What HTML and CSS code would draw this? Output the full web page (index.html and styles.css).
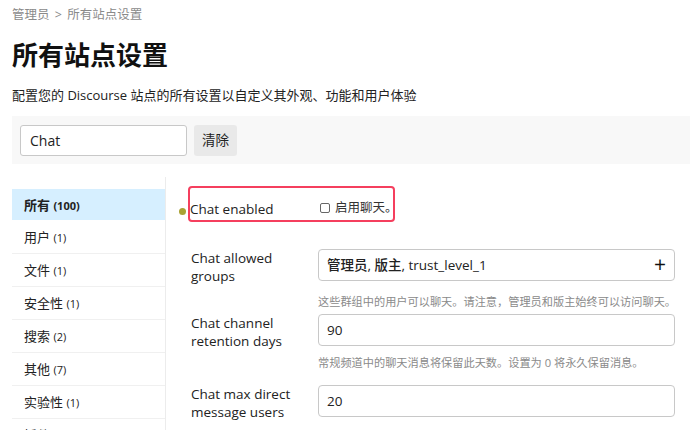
FILE: index.html
```html
<!DOCTYPE html>
<html lang="zh">
<head>
<meta charset="utf-8">
<link rel="stylesheet" href="styles.css">
</head>
<body>
<div class="page">
  <div class="crumbs">管理员 <span class="sep">&gt;</span> 所有站点设置</div>
  <h1 class="title">所有站点设置</h1>
  <p class="desc">配置您的 Discourse 站点的所有设置以自定义其外观、功能和用户体验</p>
  <div class="filter">
    <div class="search">Chat</div>
    <div class="clear">清除</div>
  </div>
  <div class="main">
    <ul class="nav">
      <li class="item active">所有 <span class="count">(100)</span></li>
      <li class="item">用户 <span class="count">(1)</span></li>
      <li class="item">文件 <span class="count">(1)</span></li>
      <li class="item">安全性 <span class="count">(1)</span></li>
      <li class="item">搜索 <span class="count">(2)</span></li>
      <li class="item">其他 <span class="count">(7)</span></li>
      <li class="item">实验性 <span class="count">(1)</span></li>
      <li class="item">插件 <span class="count">(86)</span></li>
    </ul>
    <div class="settings">
      <div class="row first">
        <span class="dot"></span>
        <div class="hl">
          <div class="hl-label">Chat enabled</div>
          <div class="check"><span class="box"></span>启用聊天。</div>
        </div>
      </div>
      <div class="row r2">
        <div class="label">Chat allowed groups</div>
        <div class="value">
          <div class="field multi"><span>管理员, 版主, trust_level_1</span><span class="plus">+</span></div>
          <div class="hint h2">这些群组中的用户可以聊天。请注意，管理员和版主始终可以访问聊天。</div>
        </div>
      </div>
      <div class="row r3">
        <div class="label">Chat channel retention days</div>
        <div class="value">
          <div class="field">90</div>
          <div class="hint">常规频道中的聊天消息将保留此天数。设置为 0 将永久保留消息。</div>
        </div>
      </div>
      <div class="row r4">
        <div class="label">Chat max direct message users</div>
        <div class="value">
          <div class="field">20</div>
        </div>
      </div>
    </div>
  </div>
</div>
</body>
</html>
```

FILE: styles.css
```css
* { box-sizing: border-box; }
html, body { margin: 0; padding: 0; background: #fff; }
body {
  font-family: "Open Sans", "Noto Sans CJK SC", sans-serif;
  color: #222;
  width: 690px;
  height: 430px;
  overflow: hidden;
}
.page { padding: 5px 0 0 12px; }
.crumbs { font-size: 12.5px; color: #8a8a8a; line-height: 20px; }
.crumbs .sep { margin: 0 2px; }
.title {
  margin: 12px 0 0;
  font-size: 26px;
  font-weight: 700;
  line-height: 36px;
  color: #111;
}
.desc { margin: 12px 0 0; font-size: 13px; line-height: 20px; }
.filter {
  margin-top: 11px;
  height: 48px;
  background: #f8f8f8;
  display: flex;
  align-items: center;
  padding: 0 8px;
  gap: 7px;
}
.search {
  width: 167px;
  height: 31px;
  background: #fff;
  border: 1px solid #c8c8c8;
  border-radius: 3px;
  font-size: 14px;
  line-height: 29px;
  padding-left: 9px;
}
.clear {
  width: 43px;
  height: 31px;
  background: #e9e9e9;
  border-radius: 3px;
  font-size: 13.5px;
  line-height: 31px;
  text-align: center;
}
.main { display: flex; margin-top: 13px; }
.nav {
  list-style: none;
  margin: 0;
  padding: 12px 0 0;
  width: 154px;
  border-right: 1px solid #ececec;
  flex: none;
}
.item {
  height: 33px;
  border-bottom: 1px solid #f0f0f0;
  padding-left: 12px;
  font-size: 13px;
  line-height: 32px;
}
.item .count { font-size: 11px; }
.item.active { background: #d6efff; font-weight: 700; border-bottom-color: #fff; height: 32px; line-height: 33px; }
.settings { flex: 1; padding-left: 14px; }
.row { display: flex; }
.row.first { align-items: center; margin-top: 9px; }
.dot {
  width: 7px;
  height: 7px;
  border-radius: 50%;
  background: #a9a233;
  margin: 14px 2px 0 -1px;
  flex: none;
}
.hl {
  display: flex;
  width: 207px;
  height: 36px;
  border: 2px solid #f53f5e;
  border-radius: 4px;
  padding-top: 11px;
  white-space: nowrap;
}
.hl-label { width: 130px; font-size: 13.5px; line-height: 20px; flex: none; }
.check {
  display: flex;
  align-items: center;
  font-size: 12.5px;
  line-height: 20px;
  height: 20px;
  margin-top: -1px;
  color: #333;
  white-space: nowrap;
}
.box {
  width: 10px;
  height: 10px;
  border: 1px solid #666;
  border-radius: 2px;
  margin-right: 5px;
  flex: none;
}
.label {
  width: 127px;
  margin-left: 11px;
  font-size: 13.5px;
  line-height: 18px;
  flex: none;
}
.value { width: 357px; }
.field {
  height: 32px;
  border: 1px solid #c8c8c8;
  border-radius: 4px;
  font-size: 13.5px;
  line-height: 30px;
  padding-left: 8px;
}
.multi { display: flex; justify-content: space-between; padding-right: 8px; font-weight: 500; }
.plus { font-size: 21px; font-weight: 400; color: #111; line-height: 29px; }
.hint {
  font-size: 11.2px;
  color: #8a8a8a;
  line-height: 18px;
  margin-top: 8px;
  white-space: nowrap;
}
.hint.h2 { margin-top: 12px; }
.r2 { margin-top: 27px; }
.r3 { margin-top: 3px; }
.r4 { margin-top: 13px; }
```
